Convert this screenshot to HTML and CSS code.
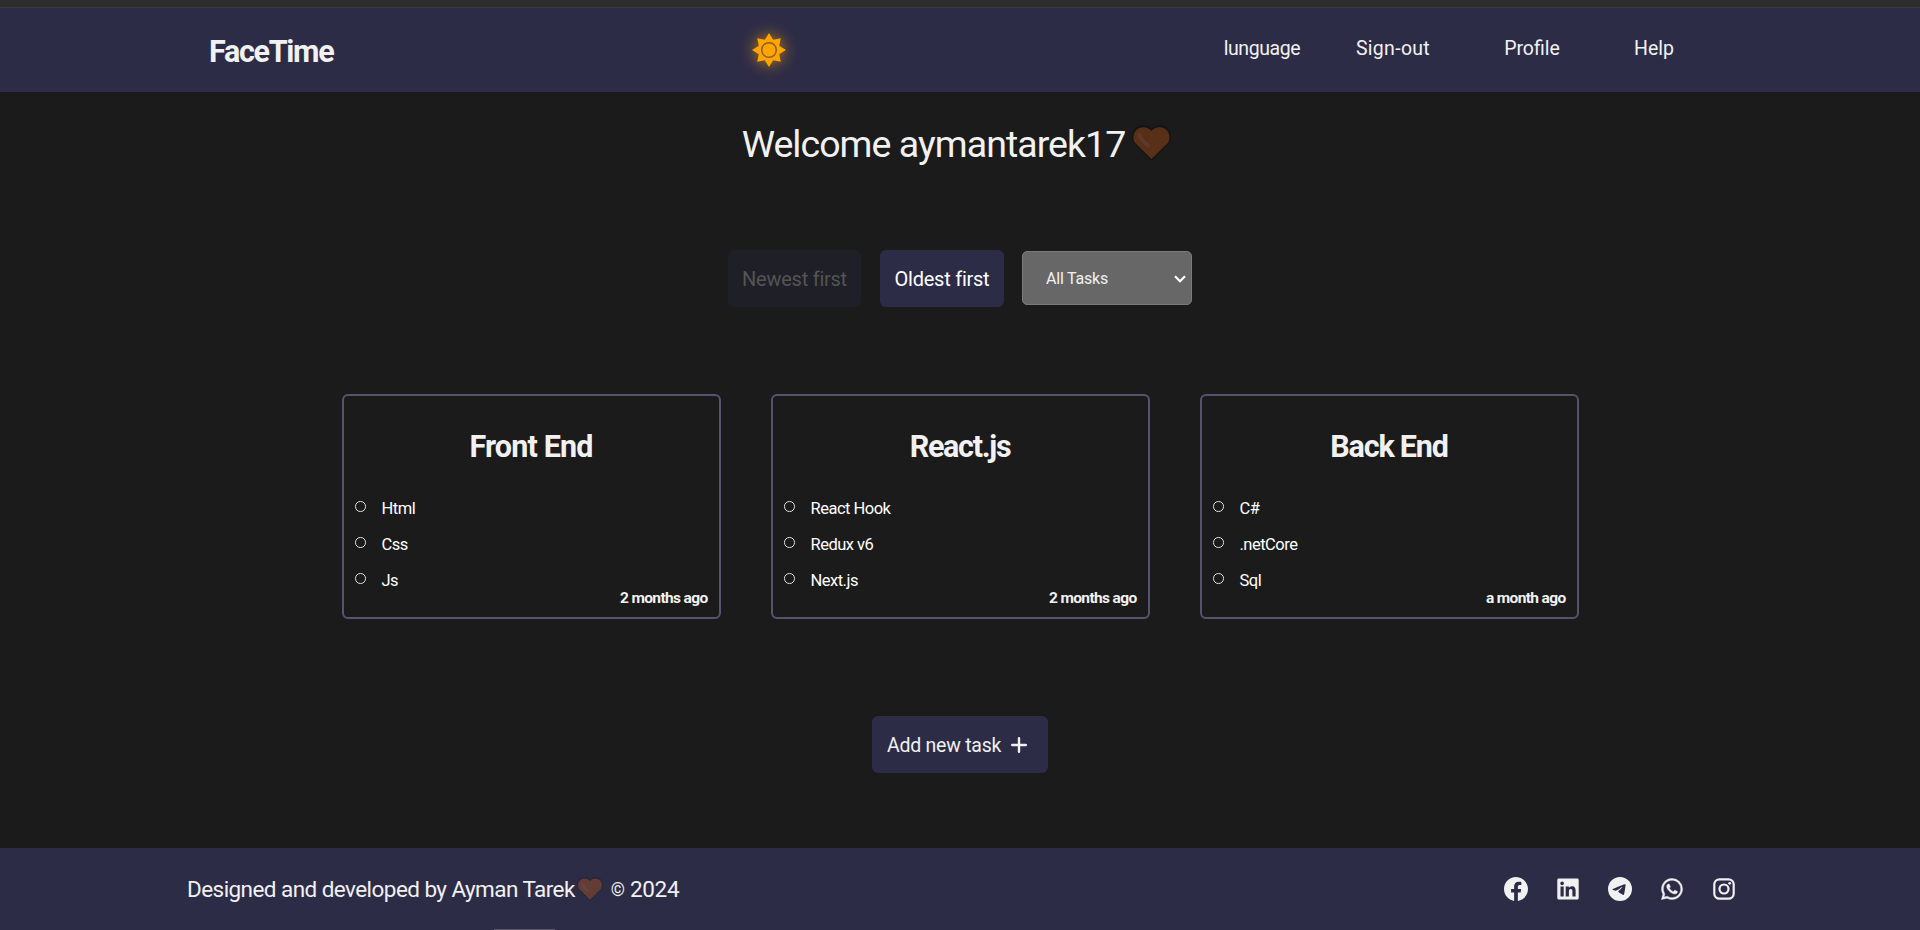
FILE: index.html
```
<!DOCTYPE html>
<html lang="en">
<head>
<meta charset="utf-8">
<title>FaceTime</title>
<link rel="stylesheet" href="styles.css">
</head>
<body>
<svg width="0" height="0" class="defs" aria-hidden="true">
  <symbol id="heart" viewBox="0 0 39 36">
    <path class="heart-edge" d="M19.500 36 2.700 19.200C-1.200 15 -.8 7 3.100 3.200 7.500-1 15-.8 19.500 3.600 24-.8 31.500-1 35.900 3.200c3.900 3.800 4.300 11.800.4 16Z"/>
    <path class="heart-fill" d="M19.500 34 3.400 18.200C.6 14.900.9 8.300 4.400 4.900 8.500 1.100 15.700 1.300 19.500 6c3.800-4.700 11-4.900 15.100-1.100 3.500 3.400 3.800 10 1 13.300Z"/>
    <path class="heart-shine" d="M7.500 10c.5 4 5 7.500 8.500 10.500"/>
  </symbol>
</svg>

<div class="strip"></div>
<header class="navbar">
  <h1 class="brand">FaceTime</h1>
  <div class="sun">
    <svg width="36" height="36" viewBox="-18 -18 36 36">
      <path fill="#ffa500" d="M0-17 4.200-10.200 11.800-11.800 10.200-4.200 17 0 10.200 4.200 11.800 11.800 4.200 10.200 0 17-4.200 10.200-11.800 11.800-10.200 4.200-17 0-10.200-4.200-11.800-11.800-4.200-10.200Z"/>
      <circle r="7.300" fill="#ffa500" stroke="#8a5d33" stroke-width="1.500"/>
    </svg>
  </div>
  <nav class="links">
    <a class="tight">lunguage</a><a class="loose">Sign-out</a><a>Profile</a><a>Help</a>
  </nav>
</header>

<main>
  <h2 class="welcome"><span>Welcome aymantarek17</span><svg class="heart" width="39" height="36"><use href="#heart"/></svg></h2>

  <div class="filters">
    <button class="btn newest" disabled>Newest first</button>
    <button class="btn oldest">Oldest first</button>
    <div class="select"><span>All Tasks</span>
      <svg width="14" height="10" viewBox="0 0 14 10"><path d="M2 2.200 7 7.200 12 2.200" fill="none" stroke="#fff" stroke-width="2.200"/></svg>
    </div>
  </div>

  <section class="cards">
    <article class="card">
      <h3 class="front">Front End</h3>
      <ul><li>Html</li><li>Css</li><li>Js</li></ul>
      <time>2 months ago</time>
    </article>
    <article class="card">
      <h3 class="react">React.js</h3>
      <ul><li>React Hook</li><li>Redux v6</li><li>Next.js</li></ul>
      <time>2 months ago</time>
    </article>
    <article class="card">
      <h3 class="back">Back End</h3>
      <ul><li>C#</li><li>.netCore</li><li>Sql</li></ul>
      <time>a month ago</time>
    </article>
  </section>

  <button class="btn add"><span>Add new task</span>
    <svg width="16" height="16" viewBox="0 0 16 16"><path d="M8 1.200v13.600M1.200 8h13.600" stroke="#f1f1f1" stroke-width="2.400" stroke-linecap="round"/></svg>
  </button>
</main>

<footer class="footer">
  <p class="credit"><span>Designed and developed by Ayman Tarek</span><svg class="heart dim" width="26" height="24"><use href="#heart"/></svg><span class="year"><span class="copy">©</span> 2024</span></p>
  <div class="social">
    <svg viewBox="0 0 24 24"><path d="M24 12.073c0-6.627-5.373-12-12-12s-12 5.373-12 12c0 5.990 4.388 10.954 10.125 11.854v-8.385H7.078v-3.470h3.047V9.430c0-3.007 1.792-4.669 4.533-4.669 1.312 0 2.686.235 2.686.235v2.953H15.830c-1.491 0-1.956.925-1.956 1.874v2.250h3.328l-.532 3.470h-2.796v8.385C19.612 23.027 24 18.062 24 12.073z"/></svg>
    <svg viewBox="0 0 24 24"><path fill-rule="evenodd" d="M2.700 1.500h18.600c.8 0 1.400.7 1.400 1.500v18c0 .8-.6 1.500-1.400 1.500H2.700c-.8 0-1.400-.7-1.400-1.500V3c0-.8.600-1.500 1.400-1.500ZM4.500 9.500v10h3.200v-10Zm1.600-5a1.800 1.800 0 1 0 0 3.700 1.800 1.800 0 0 0 0-3.700ZM9.700 9.500v10h3.200v-5c0-1.300.3-2.600 1.900-2.600s1.600 1.500 1.600 2.700v4.900h3.200V14c0-2.700-.6-4.800-3.700-4.800-1.500 0-2.500.8-2.900 1.600h-.1V9.500Z"/></svg>
    <svg viewBox="0 0 24 24"><path d="M11.944 0A12 12 0 0 0 0 12a12 12 0 0 0 12 12 12 12 0 0 0 12-12A12 12 0 0 0 12 0a12 12 0 0 0-.056 0zm4.962 7.224c.1-.002.321.023.465.140a.506.506 0 0 1 .171.325c.016.093.036.306.020.472-.180 1.898-.962 6.502-1.360 8.627-.168.900-.499 1.201-.820 1.230-.696.065-1.225-.460-1.900-.902-1.056-.693-1.653-1.124-2.678-1.800-1.185-.780-.417-1.210.258-1.910.177-.184 3.247-2.977 3.307-3.230.007-.032.014-.150-.056-.212s-.174-.041-.249-.024c-.106.024-1.793 1.140-5.061 3.345-.480.330-.913.490-1.302.480-.428-.008-1.252-.241-1.865-.440-.752-.245-1.349-.374-1.297-.789.027-.216.325-.437.893-.663 3.498-1.524 5.830-2.529 6.998-3.014 3.332-1.386 4.025-1.627 4.476-1.635z"/></svg>
    <svg class="whatsapp" viewBox="-1.600 -1.600 27.200 27.200"><path d="M17.472 14.382c-.297-.149-1.758-.867-2.030-.967-.273-.099-.471-.148-.670.150-.197.297-.767.966-.940 1.164-.173.199-.347.223-.644.075-.297-.150-1.255-.463-2.390-1.475-.883-.788-1.480-1.761-1.653-2.059-.173-.297-.018-.458.130-.606.134-.133.298-.347.446-.520.149-.174.198-.298.298-.497.099-.198.050-.371-.025-.520-.075-.149-.669-1.612-.916-2.207-.242-.579-.487-.500-.669-.510-.173-.008-.371-.010-.570-.010-.198 0-.520.074-.792.372-.272.297-1.040 1.016-1.040 2.479 0 1.462 1.065 2.875 1.213 3.074.149.198 2.096 3.200 5.077 4.487.709.306 1.262.489 1.694.625.712.227 1.360.195 1.871.118.571-.085 1.758-.719 2.006-1.413.248-.694.248-1.289.173-1.413-.074-.124-.272-.198-.570-.347m-5.421 7.403h-.004a9.870 9.870 0 0 1-5.031-1.378l-.361-.214-3.741.982.998-3.648-.235-.374a9.860 9.860 0 0 1-1.510-5.260c.001-5.450 4.436-9.884 9.888-9.884 2.640 0 5.122 1.030 6.988 2.898a9.825 9.825 0 0 1 2.893 6.994c-.003 5.450-4.437 9.884-9.885 9.884m8.413-18.297A11.815 11.815 0 0 0 12.050 0C5.495 0 .160 5.335.157 11.892c0 2.096.547 4.142 1.588 5.945L.057 24l6.305-1.654a11.882 11.882 0 0 0 5.683 1.448h.005c6.554 0 11.890-5.335 11.893-11.893a11.821 11.821 0 0 0-3.480-8.413Z"/></svg>
    <svg viewBox="0 0 24 24"><rect x="2.300" y="2.300" width="19.400" height="19.400" rx="5.200" fill="none" stroke="#f1f1f1" stroke-width="2.200"/><circle cx="12" cy="12" r="4.500" fill="none" stroke="#f1f1f1" stroke-width="2.200"/><circle cx="17.700" cy="6.300" r="1.400"/></svg>
  </div>
  <div class="scroll-hint"></div>
</footer>
</body>
</html>
```
FILE: styles.css
```
* { box-sizing: border-box; }

body {
  margin: 0;
  height: 930px;
  overflow: hidden;
  display: flex;
  flex-direction: column;
  background: #1b1b1b;
  color: #f1f1f1;
  font-family: Roboto, "Open Sans", sans-serif;
}

h1, h2, h3, p, ul { margin: 0; padding: 0; }

.defs { position: absolute; }

.strip {
  height: 8px;
  flex: none;
  background: #2d2d2d;
  border-bottom: 1px solid #3c3c3c;
}

.navbar {
  height: 84px;
  flex: none;
  display: grid;
  grid-template-columns: 500px 120px 1fr;
  align-items: center;
  padding-left: 209px;
  background: #2d2c47;
}

.brand {
  padding-top: 4px;
  font-size: 30.5px;
  line-height: 40px;
  letter-spacing: -1.3px;
}

.sun { display: flex; justify-content: center; }
.sun svg {
  overflow: visible;
  filter: drop-shadow(0 0 7px rgba(255, 165, 0, 0.5)) drop-shadow(0 0 9px rgba(255, 165, 0, 0.22));
}

.links {
  display: grid;
  grid-template-columns: 132px 130px 148px 96px;
  margin: 0 0 2px 367px;
  font-size: 19.5px;
  line-height: 28px;
  text-align: center;
}
.tight { letter-spacing: -0.4px; }
.loose { letter-spacing: 0.3px; }

main {
  height: 756px;
  flex: none;
  display: flex;
  flex-direction: column;
  align-items: center;
}

.welcome {
  height: 48px;
  margin: 28px 0 0 -7px;
  display: flex;
  align-items: center;
  font-size: 37.5px;
  line-height: 48px;
  font-weight: 400;
  letter-spacing: -0.95px;
}
.welcome .heart { margin: -2px 0 0 7px; }

.heart { --edge: #151515; --fill: #582f17; --shine: #5b3a2a; }
.dim { --edge: #27253a; --fill: #633c36; --shine: #694542; }
.heart-edge { fill: var(--edge); }
.heart-fill { fill: var(--fill); }
.heart-shine { fill: none; stroke: var(--shine); stroke-width: 4; stroke-linecap: round; }

.filters {
  display: flex;
  align-items: center;
  margin-top: 82px;
  height: 57px;
}

.btn {
  height: 57px;
  border: 0;
  border-radius: 6px;
  padding: 1px 0 0;
  background: #2d2c47;
  color: #f1f1f1;
  font: 400 20px/28px Roboto, "Open Sans", sans-serif;
  letter-spacing: -0.25px;
}
.newest { width: 133px; background: #1f1f27; color: #545455; }
.oldest { width: 124px; margin-left: 19px; color: #fff; }

.select {
  width: 170px;
  height: 54px;
  margin: -2px 0 0 18px;
  padding: 0 4px 0 23px;
  display: flex;
  align-items: center;
  justify-content: space-between;
  background: #676767;
  border: 1px solid #7b7b7b;
  border-radius: 5px;
  font-size: 16px;
  letter-spacing: -0.2px;
}
.select span, .select svg { margin-top: 2px; }

.cards {
  display: flex;
  gap: 50px;
  margin-top: 87px;
}
.card {
  width: 379px;
  height: 225px;
  display: flex;
  flex-direction: column;
  border: 2px solid #55536e;
  border-radius: 6px;
}
.card h3 {
  margin-top: 31px;
  font-size: 30.5px;
  line-height: 40px;
  text-align: center;
}
.front { letter-spacing: -0.85px; }
.react { letter-spacing: -1.3px; }
.back { letter-spacing: -1.2px; }

.card ul { margin-top: 24px; list-style: none; color: #fff; }
.card li {
  display: flex;
  align-items: center;
  height: 36px;
  padding-left: 11.5px;
  font-size: 16.5px;
  line-height: 36px;
  letter-spacing: -0.5px;
}
.card li::before {
  content: "";
  width: 8.5px;
  height: 8.5px;
  margin: -5px 16px 0 0;
  border: 1px solid #e2e2e2;
  border-radius: 50%;
}
.card time {
  align-self: flex-end;
  margin: -11px 11px 0 0;
  font-size: 15.5px;
  line-height: 20px;
  font-weight: 700;
  letter-spacing: -0.65px;
}

.add {
  width: 176px;
  margin-top: 97px;
  padding-left: 15px;
  display: flex;
  align-items: center;
  font-size: 19.5px;
  letter-spacing: -0.25px;
}
.add span { padding-top: 1px; }
.add svg { margin-left: 10px; }

.footer {
  position: relative;
  height: 82px;
  flex: none;
  display: flex;
  align-items: center;
  justify-content: space-between;
  padding: 0 184px 0 187px;
  background: #2d2c47;
}
.credit {
  display: flex;
  align-items: center;
  font-size: 22.5px;
  line-height: 30px;
  letter-spacing: -0.56px;
}
.credit .heart { margin: 0 8px 0 2px; }
.year { letter-spacing: -0.3px; }
.copy { font-size: 18px; vertical-align: 1.5px; }

.social { display: flex; gap: 28px; padding-bottom: 1px; }
.social svg { width: 24px; height: 24px; fill: #f1f1f1; }
.social .whatsapp path { stroke: #f1f1f1; stroke-width: 0.5; }

/* thin status bar edge over the bottom of the footer */
.scroll-hint {
  position: absolute;
  left: 494px;
  bottom: 0;
  width: 61px;
  height: 1px;
  background: #5c5a70;
}
```
